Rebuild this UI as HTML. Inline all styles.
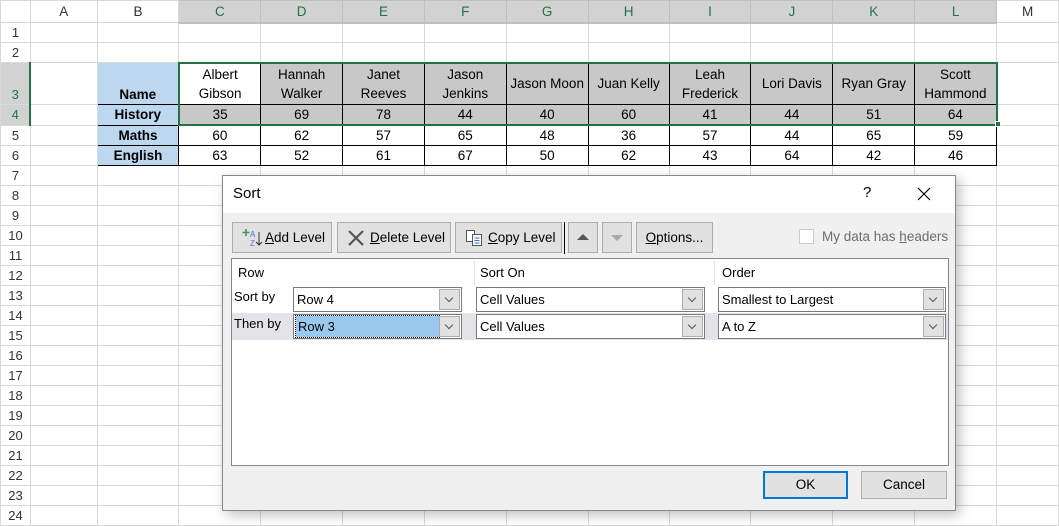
<!DOCTYPE html>
<html><head><meta charset="utf-8"><style>
*{box-sizing:border-box;margin:0;padding:0}
body{width:1059px;height:525px;overflow:hidden;background:#fff;font-family:"Liberation Sans",sans-serif;position:relative}
table.s{border-collapse:collapse;table-layout:fixed;position:absolute;left:0;top:0}
table.s td{border:1px solid #d9d9d9;font-size:13.5px;text-align:center;padding:0;line-height:19px;overflow:hidden;white-space:nowrap;color:#000}
table.s td.h{background:#fff;color:#333;border-color:#d9d9d9}
table.s td.hs{background:#d2d2d2;color:#217346;border-bottom:2px solid #217346;border-color:#c0c0c0}
table.s td.rh{background:#fff;color:#333;text-align:center;border-color:#d9d9d9;font-size:13px}
table.s td.rs{background:#d2d2d2;color:#217346;border-right:2px solid #217346}
table.s td.b{background:#bdd7ee;font-weight:bold;border:1px solid #000}
table.s td.d{border:1px solid #000}
table.s td.g{background:#c8c8c8;border:1px solid #000}
.tl{white-space:normal!important;line-height:19px!important}
.dlg{position:absolute;left:222px;top:175px;width:734px;height:336px;background:#f0f0f0;border:1px solid #888;box-shadow:4px 4px 12px rgba(0,0,0,.25)}
.tt{position:absolute;left:0;top:0;width:732px;height:37px;background:#fff;font-size:15px}
.btn{position:absolute;top:46px;height:31px;background:#e1e1e1;border:1px solid #adadad;font-size:13.5px;line-height:29px;color:#000}
.pan{position:absolute;left:8px;top:82px;width:718px;height:208px;background:#fff;border:1px solid #828790}
.cb{position:absolute;height:25px;background:#fff;border:1px solid #7a7a7a;font-size:13px;line-height:23px;padding-left:3px}
.dd{position:absolute;right:1px;top:1px;width:21px;height:21px;background:#e1e1e1;border:1px solid #adadad}
.dd:after{content:"";position:absolute;left:6px;top:5px;width:5px;height:5px;border-right:1px solid #555;border-bottom:1px solid #555;transform:rotate(45deg)}
u{text-decoration:underline}
</style></head><body>
<table class="s">
<colgroup><col style="width:30px"><col style="width:67px"><col style="width:82px"><col style="width:82px"><col style="width:82px"><col style="width:82px"><col style="width:82px"><col style="width:82px"><col style="width:81px"><col style="width:82px"><col style="width:82px"><col style="width:82px"><col style="width:82px"><col style="width:62px"></colgroup>
<tr style="height:22px"><td class="h"></td><td class="h">A</td><td class="h">B</td><td class="hs">C</td><td class="hs">D</td><td class="hs">E</td><td class="hs">F</td><td class="hs">G</td><td class="hs">H</td><td class="hs">I</td><td class="hs">J</td><td class="hs">K</td><td class="hs">L</td><td class="h">M</td></tr>
<tr style="height:20px"><td class="rh">1</td><td></td><td></td><td></td><td></td><td></td><td></td><td></td><td></td><td></td><td></td><td></td><td></td><td></td></tr>
<tr style="height:20px"><td class="rh">2</td><td></td><td></td><td></td><td></td><td></td><td></td><td></td><td></td><td></td><td></td><td></td><td></td><td></td></tr>
<tr style="height:42px"><td class="rh rs" style="vertical-align:bottom">3</td><td></td><td class="b" style="vertical-align:bottom">Name</td>
<td class="d tl" style="border-top:2px solid #217346;border-left:2px solid #217346">Albert<br>Gibson</td><td class="g tl" style="border-top:2px solid #217346">Hannah<br>Walker</td><td class="g tl" style="border-top:2px solid #217346">Janet<br>Reeves</td><td class="g tl" style="border-top:2px solid #217346">Jason<br>Jenkins</td><td class="g" style="border-top:2px solid #217346">Jason Moon</td><td class="g" style="border-top:2px solid #217346">Juan Kelly</td><td class="g tl" style="border-top:2px solid #217346">Leah<br>Frederick</td><td class="g" style="border-top:2px solid #217346">Lori Davis</td><td class="g" style="border-top:2px solid #217346">Ryan Gray</td><td class="g tl" style="border-top:2px solid #217346;border-right:2px solid #217346">Scott<br>Hammond</td><td></td></tr>
<tr style="height:20px"><td class="rh rs">4</td><td></td><td class="b">History</td>
<td class="g" style="border-left:2px solid #217346;border-bottom:2px solid #217346">35</td><td class="g" style="border-bottom:2px solid #217346">69</td><td class="g" style="border-bottom:2px solid #217346">78</td><td class="g" style="border-bottom:2px solid #217346">44</td><td class="g" style="border-bottom:2px solid #217346">40</td><td class="g" style="border-bottom:2px solid #217346">60</td><td class="g" style="border-bottom:2px solid #217346">41</td><td class="g" style="border-bottom:2px solid #217346">44</td><td class="g" style="border-bottom:2px solid #217346">51</td><td class="g" style="border-bottom:2px solid #217346;border-right:2px solid #217346">64</td><td></td></tr>
<tr style="height:20px"><td class="rh">5</td><td></td><td class="b">Maths</td><td class="d">60</td><td class="d">62</td><td class="d">57</td><td class="d">65</td><td class="d">48</td><td class="d">36</td><td class="d">57</td><td class="d">44</td><td class="d">65</td><td class="d">59</td><td></td></tr>
<tr style="height:20px"><td class="rh">6</td><td></td><td class="b">English</td><td class="d">63</td><td class="d">52</td><td class="d">61</td><td class="d">67</td><td class="d">50</td><td class="d">62</td><td class="d">43</td><td class="d">64</td><td class="d">42</td><td class="d">46</td><td></td></tr>
<tr style="height:20px"><td class="rh">7</td><td></td><td></td><td></td><td></td><td></td><td></td><td></td><td></td><td></td><td></td><td></td><td></td><td></td></tr>
<tr style="height:20px"><td class="rh">8</td><td></td><td></td><td></td><td></td><td></td><td></td><td></td><td></td><td></td><td></td><td></td><td></td><td></td></tr>
<tr style="height:20px"><td class="rh">9</td><td></td><td></td><td></td><td></td><td></td><td></td><td></td><td></td><td></td><td></td><td></td><td></td><td></td></tr>
<tr style="height:20px"><td class="rh">10</td><td></td><td></td><td></td><td></td><td></td><td></td><td></td><td></td><td></td><td></td><td></td><td></td><td></td></tr>
<tr style="height:20px"><td class="rh">11</td><td></td><td></td><td></td><td></td><td></td><td></td><td></td><td></td><td></td><td></td><td></td><td></td><td></td></tr>
<tr style="height:20px"><td class="rh">12</td><td></td><td></td><td></td><td></td><td></td><td></td><td></td><td></td><td></td><td></td><td></td><td></td><td></td></tr>
<tr style="height:20px"><td class="rh">13</td><td></td><td></td><td></td><td></td><td></td><td></td><td></td><td></td><td></td><td></td><td></td><td></td><td></td></tr>
<tr style="height:20px"><td class="rh">14</td><td></td><td></td><td></td><td></td><td></td><td></td><td></td><td></td><td></td><td></td><td></td><td></td><td></td></tr>
<tr style="height:20px"><td class="rh">15</td><td></td><td></td><td></td><td></td><td></td><td></td><td></td><td></td><td></td><td></td><td></td><td></td><td></td></tr>
<tr style="height:20px"><td class="rh">16</td><td></td><td></td><td></td><td></td><td></td><td></td><td></td><td></td><td></td><td></td><td></td><td></td><td></td></tr>
<tr style="height:20px"><td class="rh">17</td><td></td><td></td><td></td><td></td><td></td><td></td><td></td><td></td><td></td><td></td><td></td><td></td><td></td></tr>
<tr style="height:20px"><td class="rh">18</td><td></td><td></td><td></td><td></td><td></td><td></td><td></td><td></td><td></td><td></td><td></td><td></td><td></td></tr>
<tr style="height:20px"><td class="rh">19</td><td></td><td></td><td></td><td></td><td></td><td></td><td></td><td></td><td></td><td></td><td></td><td></td><td></td></tr>
<tr style="height:20px"><td class="rh">20</td><td></td><td></td><td></td><td></td><td></td><td></td><td></td><td></td><td></td><td></td><td></td><td></td><td></td></tr>
<tr style="height:20px"><td class="rh">21</td><td></td><td></td><td></td><td></td><td></td><td></td><td></td><td></td><td></td><td></td><td></td><td></td><td></td></tr>
<tr style="height:20px"><td class="rh">22</td><td></td><td></td><td></td><td></td><td></td><td></td><td></td><td></td><td></td><td></td><td></td><td></td><td></td></tr>
<tr style="height:20px"><td class="rh">23</td><td></td><td></td><td></td><td></td><td></td><td></td><td></td><td></td><td></td><td></td><td></td><td></td><td></td></tr>
<tr style="height:20px"><td class="rh">24</td><td></td><td></td><td></td><td></td><td></td><td></td><td></td><td></td><td></td><td></td><td></td><td></td><td></td></tr>
</table>
<div style="position:absolute;left:995px;top:121px;width:6px;height:6px;background:#217346;border:1px solid #fff"></div>

<div class="dlg">
 <div class="tt"><span style="position:absolute;left:10px;top:9px">Sort</span><span style="position:absolute;left:640px;top:8px">?</span><svg style="position:absolute;left:694px;top:11px" width="14" height="14"><path d="M1 1l12 12M13 1L1 13" stroke="#000" stroke-width="1.2"/></svg></div>
 <div class="btn" style="left:9px;width:100px"><svg style="position:absolute;left:8px;top:5px" width="22" height="20"><path d="M5 1v7M1.5 4.5h7" stroke="#3a9a5a" stroke-width="1.6"/><text x="9" y="9" font-size="8" fill="#4a6fd8" font-family="Liberation Sans">A</text><text x="9" y="18" font-size="8" fill="#9b59b6" font-family="Liberation Sans">Z</text><path d="M18 4v13M15 14l3 3 3-3" stroke="#333" fill="none"/></svg><span style="position:absolute;left:32px"><u>A</u>dd Level</span></div>
 <div class="btn" style="left:114px;width:114px"><svg style="position:absolute;left:9px;top:6px" width="18" height="18"><path d="M2 2l14 14M16 2L2 16" stroke="#555" stroke-width="2.2"/></svg><span style="position:absolute;left:32px"><u>D</u>elete Level</span></div>
 <div class="btn" style="left:232px;width:107px"><svg style="position:absolute;left:9px;top:6px" width="20" height="18"><rect x="1.5" y="1.5" width="8" height="11" fill="#fff" stroke="#555"/><rect x="7.5" y="5.5" width="9" height="11" fill="#fff" stroke="#555"/><path d="M9.5 9h5M9.5 11.5h5M9.5 14h5" stroke="#3b6fc8"/></svg><span style="position:absolute;left:32px"><u>C</u>opy Level</span></div>
 <div style="position:absolute;left:341px;top:46px;width:1px;height:32px;background:#000"></div>
 <div class="btn" style="left:345px;width:30px"><svg style="position:absolute;left:8px;top:10px" width="12" height="8"><path d="M0 7L6 1l6 6z" fill="#555"/></svg></div>
 <div class="btn" style="left:379px;width:30px"><svg style="position:absolute;left:8px;top:11px" width="12" height="8"><path d="M0 1L6 7l6-6z" fill="#aaa"/></svg></div>
 <div class="btn" style="left:413px;width:77px;text-align:center"><u>O</u>ptions...</div>
 <div style="position:absolute;left:576px;top:53px;width:15px;height:15px;border:1px solid #ccc;background:#fff"></div>
 <div style="position:absolute;left:599px;top:53px;font-size:13.5px;color:#6d6d6d">My data has <u>h</u>eaders</div>
 <div class="pan">
  <span style="position:absolute;left:6px;top:6px;font-size:13px">Row</span>
  <span style="position:absolute;left:248px;top:6px;font-size:13px">Sort On</span>
  <span style="position:absolute;left:490px;top:6px;font-size:13px">Order</span>
  <div style="position:absolute;left:242px;top:2px;width:1px;height:24px;background:#e5e5e5"></div>
  <div style="position:absolute;left:482px;top:2px;width:1px;height:24px;background:#e5e5e5"></div>
  <div style="position:absolute;left:0;top:54px;width:716px;height:27px;background:#e3e3e8"></div>
  <span style="position:absolute;left:2px;top:30px;font-size:13px">Sort by</span>
  <span style="position:absolute;left:2px;top:57px;font-size:13px">Then by</span>
  <div class="cb" style="left:61px;top:28px;width:169px">Row 4<div class="dd"></div></div>
  <div class="cb" style="left:61px;top:55px;width:169px;"><span style="background:#99c9ef;display:block;margin-left:-1px;margin-top:1px;width:143px;height:21px;line-height:21px;outline:1px dotted #000;padding-left:2px">Row 3</span><div class="dd"></div></div>
  <div class="cb" style="left:244px;top:28px;width:229px">Cell Values<div class="dd"></div></div>
  <div class="cb" style="left:244px;top:55px;width:229px">Cell Values<div class="dd"></div></div>
  <div class="cb" style="left:486px;top:28px;width:228px">Smallest to Largest<div class="dd"></div></div>
  <div class="cb" style="left:486px;top:55px;width:228px">A to Z<div class="dd"></div></div>
 </div>
 <div class="btn" style="left:540px;top:295px;width:85px;height:28px;border:2px solid #0078d7;text-align:center;line-height:24px">OK</div>
 <div class="btn" style="left:638px;top:295px;width:86px;height:28px;text-align:center;line-height:26px">Cancel</div>
</div>
</body></html>
